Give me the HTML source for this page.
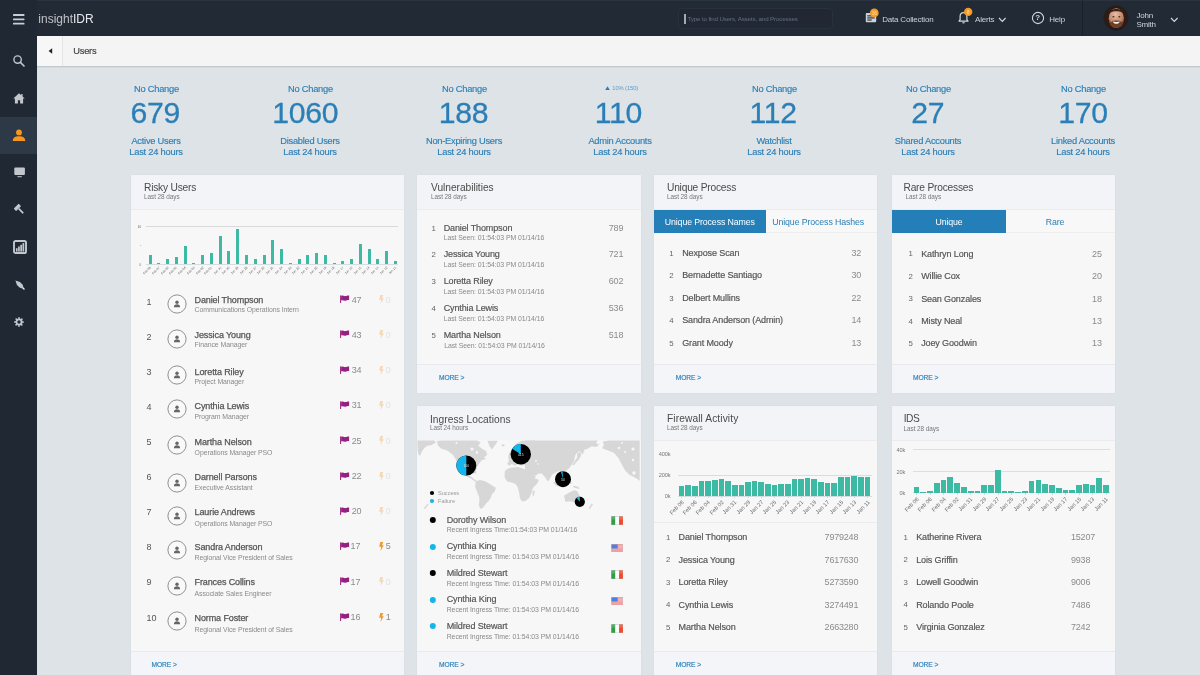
<!DOCTYPE html>
<html><head><meta charset="utf-8"><title>insightIDR - Users</title>
<style>
html,body{margin:0;padding:0;}
body{width:1200px;height:675px;overflow:hidden;background:#dde3e6;font-family:"Liberation Sans",sans-serif;position:relative;}
.t{position:absolute;line-height:1;white-space:nowrap;}
.abs{position:absolute;}
#topbar{position:absolute;left:0;top:0;width:1200px;height:36px;background:#222a36;box-sizing:border-box;border-top:1px solid #2b333f;}
#side{position:absolute;left:0;top:0;width:37px;height:675px;background:#202834;}
#side .act{position:absolute;left:0;top:117px;width:37px;height:37px;background:#2d3946;}
#crumb{position:absolute;left:37px;top:36px;width:1163px;height:30px;background:#f4f4f4;border-bottom:1px solid #c3c8cc;box-shadow:0 1px 0 rgba(0,0,0,0.04);}
#crumb .back{position:absolute;left:0;top:0;width:25px;height:30px;background:#f7f7f7;border-right:1px solid #e6e6e6;}
.panel{position:absolute;background:#f7f7f7;box-shadow:0 0 1px rgba(0,0,0,0.08);}
.panel .hd{position:absolute;left:0;top:0;right:0;height:35px;background:#f3f4f8;border-bottom:1px solid #ececf0;box-sizing:border-box;}
.panel .ft{position:absolute;left:0;right:0;background:#f3f5f9;border-top:1px solid #e9eaee;box-sizing:border-box;}
.bar{position:absolute;background:#3dbaa3;}
.grid{position:absolute;height:1px;background:#dcdcdc;}
.rot{position:absolute;white-space:nowrap;line-height:1;transform-origin:100% 50%;transform:rotate(-45deg);color:#6c6c6c;}
#root{position:absolute;left:0;top:0;width:1200px;height:675px;will-change:transform;}
</style></head><body><div id="root">

<div id="topbar"></div>
<div id="side"><div class="act"></div></div>
<svg class="abs" style="left:13px;top:14px" width="12" height="11" viewBox="0 0 12 11"><g fill="#c9ced4"><rect x="0" y="0.100" width="11.500" height="1.800" rx="0.600"/><rect x="0" y="4.400" width="11.500" height="1.800" rx="0.600"/><rect x="0" y="8.700" width="11.500" height="1.800" rx="0.600"/></g></svg>
<span class="t" style="top:12px;font-size:12px;line-height:14px;color:#e6e9ec;left:38.30px;"><span style="opacity:.78">insight</span><span>IDR</span></span>
<div class="abs" style="left:677.5px;top:8px;width:155px;height:21px;border:1px solid #28323e;border-radius:4px;box-sizing:border-box;background:#212834"></div>
<div class="abs" style="left:684px;top:14px;width:1.500px;height:9.500px;background:#a3a9b1"></div>
<span class="t" style="top:15px;font-size:6.2px;line-height:7px;color:#65707d;letter-spacing:-0.14px;left:687.50px;">Type to find Users, Assets, and Processes</span>
<svg class="abs" style="left:864px;top:7px" width="18" height="18" viewBox="0 0 18 18"><rect x="1.8" y="6" width="10.4" height="9.2" rx="0.9" fill="#cdd2d8"/><rect x="3.300" y="8.300" width="7.400" height="1.100" fill="#222a36"/><rect x="3.300" y="10.400" width="7.400" height="1.100" fill="#222a36"/><rect x="3.300" y="12.500" width="4.400" height="1.100" fill="#222a36"/><circle cx="10.3" cy="5.9" r="4.4" fill="#f39a27"/></svg>
<span class="t" style="top:11px;font-size:4.6px;line-height:5px;color:#fbe3c4;left:724.30px;width:300px;text-align:center;">16</span>
<span class="t" style="top:15px;font-size:8px;line-height:9px;color:#cfd4da;letter-spacing:-0.2px;left:882.20px;">Data Collection</span>
<svg class="abs" style="left:955px;top:7px" width="18" height="20" viewBox="0 0 18 20"><path d="M8.500 5.600c-2.300 0-3.400 1.800-3.400 3.900v3.200l-1.100 1.500h9l-1.100-1.500V9.500c0-2.100-1.100-3.900-3.400-3.900z" fill="none" stroke="#d3d7dc" stroke-width="1.200" stroke-linejoin="round"/><path d="M7.200 15.200a1.300 1.300 0 0 0 2.600 0z" fill="#d3d7dc"/><circle cx="13.2" cy="4.900" r="4.200" fill="#f39a27"/></svg>
<span class="t" style="top:10px;font-size:4.6px;line-height:5px;color:#fbe3c4;left:818.20px;width:300px;text-align:center;">8</span>
<span class="t" style="top:15px;font-size:8px;line-height:9px;color:#cfd4da;letter-spacing:-0.2px;left:975.00px;">Alerts</span>
<svg class="abs" style="left:998px;top:16.700px" width="9" height="6" viewBox="0 0 9 6"><path d="M1 1l3.300 3.300L7.600 1" fill="none" stroke="#d3d7dc" stroke-width="1.200"/></svg>
<svg class="abs" style="left:1030.800px;top:10.500px" width="14" height="14" viewBox="0 0 14 14"><circle cx="7" cy="7" r="5.600" fill="none" stroke="#d3d7dc" stroke-width="1.100"/></svg>
<span class="t" style="top:13px;font-size:8px;line-height:9px;color:#d3d7dc;font-weight:700;left:887.80px;width:300px;text-align:center;">?</span>
<span class="t" style="top:15px;font-size:8px;line-height:9px;color:#cfd4da;letter-spacing:-0.2px;left:1049.30px;">Help</span>
<div class="abs" style="left:1082px;top:0;width:1px;height:36px;background:#1a212b"></div>
<svg class="abs" style="left:1103.200px;top:4.500px" width="26" height="26" viewBox="0 0 26 26"><defs><clipPath id="av"><circle cx="13" cy="13" r="12.400"/></clipPath><radialGradient id="sk" cx="0.450" cy="0.300" r="0.750"><stop offset="0" stop-color="#e9bda6"/><stop offset="0.450" stop-color="#cf9576"/><stop offset="1" stop-color="#9c5f45"/></radialGradient><filter id="bl" x="-20%" y="-20%" width="140%" height="140%"><feGaussianBlur stdDeviation="0.400"/></filter></defs><g clip-path="url(#av)"><rect width="26" height="26" fill="#2b1c16"/><g filter="url(#bl)"><ellipse cx="13.300" cy="13.200" rx="7.600" ry="10" fill="url(#sk)"/><path d="M5.200 11.500C4.300 1.500 22.300 1.500 21.400 11.500C20.600 7.800 18.500 6.200 13.300 6.200S6 7.800 5.200 11.500z" fill="#38201a"/><path d="M5.800 13.500C6 26 20.600 26 20.800 13.500C19.800 17.200 18.300 17.800 16.900 15.900C15.500 15.200 11.100 15.200 9.700 15.900C8.300 17.800 6.800 17.200 5.800 13.500z" fill="#6d3f2c"/><path d="M9.900 16.500C11.500 17.100 15.100 17.100 16.700 16.500C16.200 19.600 10.400 19.600 9.900 16.500z" fill="#f8f2ee"/><ellipse cx="10.400" cy="11.700" rx="1.100" ry="0.800" fill="#4a2f26"/><ellipse cx="16.300" cy="11.700" rx="1.100" ry="0.800" fill="#4a2f26"/><path d="M3 27c0-3.200 4.500-3.800 10.300-3.800s10.300.6 10.300 3.800z" fill="#1c1b20"/></g></g></svg>
<span class="t" style="top:11px;font-size:8px;line-height:9px;color:#cfd4da;letter-spacing:-0.2px;left:1136.40px;">John</span>
<span class="t" style="top:20px;font-size:8px;line-height:9px;color:#cfd4da;letter-spacing:-0.2px;left:1136.40px;">Smith</span>
<svg class="abs" style="left:1170.200px;top:16.700px" width="9" height="6" viewBox="0 0 9 6"><path d="M1 1l3.300 3.300L7.600 1" fill="none" stroke="#d3d7dc" stroke-width="1.200"/></svg>
<svg class="abs" style="left:12px;top:54px" width="14" height="14" viewBox="0 0 14 14"><circle cx="5.6" cy="5.6" r="3.7" fill="none" stroke="#c2c7ce" stroke-width="1.4"/><path d="M8.4 8.4l3.6 3.6" stroke="#c2c7ce" stroke-width="1.7" stroke-linecap="round"/></svg>
<svg class="abs" style="left:13px;top:93px" width="12" height="11" viewBox="0 0 12 11"><path d="M6 0.3L0.3 5.4h1.6v5h3v-3.2h2.2v3.2h3v-5h1.6L9.6 3.5V1h-1.4v1.3z" fill="#c2c7ce"/></svg>
<svg class="abs" style="left:12px;top:129px" width="14" height="13" viewBox="0 0 14 13"><circle cx="7" cy="3.4" r="2.9" fill="#f7981d"/><path d="M0.8 12c0-3.6 2.6-4.8 6.2-4.8s6.2 1.2 6.2 4.8z" fill="#f7981d"/></svg>
<svg class="abs" style="left:13.800px;top:167px" width="12" height="11" viewBox="0 0 12 11"><rect x="0.300" y="0.500" width="10.600" height="7.600" rx="1" fill="#c2c7ce"/><rect x="3.400" y="9.200" width="4.400" height="1" fill="#c2c7ce"/></svg>
<svg class="abs" style="left:14px;top:203.500px" width="12" height="12" viewBox="0 0 12 12"><g transform="rotate(-45 5.5 5.5)"><rect x="2" y="0.800" width="7" height="3.400" rx="0.500" fill="#c2c7ce"/><rect x="4.700" y="4.200" width="1.700" height="6.600" rx="0.500" fill="#c2c7ce"/></g></svg>
<svg class="abs" style="left:12.600px;top:240px" width="14" height="14" viewBox="0 0 14 14"><rect x="1" y="1" width="12" height="12" rx="1.600" fill="none" stroke="#c2c7ce" stroke-width="1.900"/><rect x="2.900" y="8.200" width="1.700" height="3.400" fill="#c2c7ce"/><rect x="5.100" y="6.500" width="1.700" height="5.100" fill="#c2c7ce"/><rect x="7.300" y="4.800" width="1.700" height="6.800" fill="#c2c7ce"/><rect x="9.500" y="3.100" width="1.700" height="8.500" fill="#c2c7ce"/></svg>
<svg class="abs" style="left:14px;top:279px" width="12" height="12" viewBox="0 0 12 12"><g transform="rotate(-45 6 6)"><path d="M6 -0.500l2.100 4.300v3.600L6 12L3.900 7.400v-3.600z" fill="#c2c7ce"/><path d="M6 9.500l0.900 2L6 12.600l-0.900-1.100z" fill="#eef0f2"/></g></svg>
<svg class="abs" style="left:14.400px;top:317px" width="10" height="10" viewBox="0 0 10 10"><rect x="4.300" y="0.200" width="1.500" height="2.200" transform="rotate(0 5 5)" fill="#c2c7ce"/><rect x="4.300" y="0.200" width="1.500" height="2.200" transform="rotate(45 5 5)" fill="#c2c7ce"/><rect x="4.300" y="0.200" width="1.500" height="2.200" transform="rotate(90 5 5)" fill="#c2c7ce"/><rect x="4.300" y="0.200" width="1.500" height="2.200" transform="rotate(135 5 5)" fill="#c2c7ce"/><rect x="4.300" y="0.200" width="1.500" height="2.200" transform="rotate(180 5 5)" fill="#c2c7ce"/><rect x="4.300" y="0.200" width="1.500" height="2.200" transform="rotate(225 5 5)" fill="#c2c7ce"/><rect x="4.300" y="0.200" width="1.500" height="2.200" transform="rotate(270 5 5)" fill="#c2c7ce"/><rect x="4.300" y="0.200" width="1.500" height="2.200" transform="rotate(315 5 5)" fill="#c2c7ce"/><circle cx="5" cy="5" r="2.600" fill="none" stroke="#c2c7ce" stroke-width="1.800"/></svg>
<div id="crumb"><div class="back"></div></div>
<svg class="abs" style="left:48px;top:48px" width="5" height="6" viewBox="0 0 5 6"><path d="M4.2 0.3v5.4L0.6 3z" fill="#222"/></svg>
<span class="t" style="top:46px;font-size:9.3px;line-height:10px;color:#444;letter-spacing:-0.25px;left:73.30px;-webkit-text-stroke:0.2px #444;">Users</span>
<span class="t" style="top:84px;font-size:9.3px;line-height:10px;color:#2b7fb7;letter-spacing:-0.25px;left:6.50px;width:300px;text-align:center;-webkit-text-stroke:0.15px #2b7fb7;">No Change</span>
<span class="t" style="top:96px;font-size:30.2px;line-height:33px;color:#2b7fb7;letter-spacing:-0.3px;left:5.20px;width:300px;text-align:center;-webkit-text-stroke:0.3px #2b7fb7;">679</span>
<span class="t" style="top:136px;font-size:9.3px;line-height:10px;color:#2b7fb7;letter-spacing:-0.25px;left:6.00px;width:300px;text-align:center;-webkit-text-stroke:0.15px #2b7fb7;">Active Users</span>
<span class="t" style="top:147px;font-size:9.3px;line-height:10px;color:#2b7fb7;letter-spacing:-0.22px;left:6.00px;width:300px;text-align:center;-webkit-text-stroke:0.15px #2b7fb7;">Last 24 hours</span>
<span class="t" style="top:84px;font-size:9.3px;line-height:10px;color:#2b7fb7;letter-spacing:-0.25px;left:160.50px;width:300px;text-align:center;-webkit-text-stroke:0.15px #2b7fb7;">No Change</span>
<span class="t" style="top:96px;font-size:30.2px;line-height:33px;color:#2b7fb7;letter-spacing:-0.3px;left:155.30px;width:300px;text-align:center;-webkit-text-stroke:0.3px #2b7fb7;">1060</span>
<span class="t" style="top:136px;font-size:9.3px;line-height:10px;color:#2b7fb7;letter-spacing:-0.25px;left:160.00px;width:300px;text-align:center;-webkit-text-stroke:0.15px #2b7fb7;">Disabled Users</span>
<span class="t" style="top:147px;font-size:9.3px;line-height:10px;color:#2b7fb7;letter-spacing:-0.22px;left:160.00px;width:300px;text-align:center;-webkit-text-stroke:0.15px #2b7fb7;">Last 24 hours</span>
<span class="t" style="top:84px;font-size:9.3px;line-height:10px;color:#2b7fb7;letter-spacing:-0.25px;left:314.50px;width:300px;text-align:center;-webkit-text-stroke:0.15px #2b7fb7;">No Change</span>
<span class="t" style="top:96px;font-size:30.2px;line-height:33px;color:#2b7fb7;letter-spacing:-0.3px;left:313.50px;width:300px;text-align:center;-webkit-text-stroke:0.3px #2b7fb7;">188</span>
<span class="t" style="top:136px;font-size:9.3px;line-height:10px;color:#2b7fb7;letter-spacing:-0.25px;left:314.00px;width:300px;text-align:center;-webkit-text-stroke:0.15px #2b7fb7;">Non-Expiring Users</span>
<span class="t" style="top:147px;font-size:9.3px;line-height:10px;color:#2b7fb7;letter-spacing:-0.22px;left:314.00px;width:300px;text-align:center;-webkit-text-stroke:0.15px #2b7fb7;">Last 24 hours</span>
<svg class="abs" style="left:605px;top:85.700px" width="5" height="4.500" viewBox="0 0 6 5"><path d="M3 0L6 5H0z" fill="#2b7fb7"/></svg>
<span class="t" style="top:85px;font-size:5.8px;line-height:6px;color:#5b9cc9;letter-spacing:-0.1px;left:612.30px;">10% (150)</span>
<span class="t" style="top:96px;font-size:30.2px;line-height:33px;color:#2b7fb7;letter-spacing:-0.3px;left:468.30px;width:300px;text-align:center;-webkit-text-stroke:0.3px #2b7fb7;">110</span>
<span class="t" style="top:136px;font-size:9.3px;line-height:10px;color:#2b7fb7;letter-spacing:-0.25px;left:470.00px;width:300px;text-align:center;-webkit-text-stroke:0.15px #2b7fb7;">Admin Accounts</span>
<span class="t" style="top:147px;font-size:9.3px;line-height:10px;color:#2b7fb7;letter-spacing:-0.22px;left:470.00px;width:300px;text-align:center;-webkit-text-stroke:0.15px #2b7fb7;">Last 24 hours</span>
<span class="t" style="top:84px;font-size:9.3px;line-height:10px;color:#2b7fb7;letter-spacing:-0.25px;left:624.50px;width:300px;text-align:center;-webkit-text-stroke:0.15px #2b7fb7;">No Change</span>
<span class="t" style="top:96px;font-size:30.2px;line-height:33px;color:#2b7fb7;letter-spacing:-0.3px;left:623.20px;width:300px;text-align:center;-webkit-text-stroke:0.3px #2b7fb7;">112</span>
<span class="t" style="top:136px;font-size:9.3px;line-height:10px;color:#2b7fb7;letter-spacing:-0.25px;left:624.00px;width:300px;text-align:center;-webkit-text-stroke:0.15px #2b7fb7;">Watchlist</span>
<span class="t" style="top:147px;font-size:9.3px;line-height:10px;color:#2b7fb7;letter-spacing:-0.22px;left:624.00px;width:300px;text-align:center;-webkit-text-stroke:0.15px #2b7fb7;">Last 24 hours</span>
<span class="t" style="top:84px;font-size:9.3px;line-height:10px;color:#2b7fb7;letter-spacing:-0.25px;left:778.50px;width:300px;text-align:center;-webkit-text-stroke:0.15px #2b7fb7;">No Change</span>
<span class="t" style="top:96px;font-size:30.2px;line-height:33px;color:#2b7fb7;letter-spacing:-0.3px;left:777.70px;width:300px;text-align:center;-webkit-text-stroke:0.3px #2b7fb7;">27</span>
<span class="t" style="top:136px;font-size:9.3px;line-height:10px;color:#2b7fb7;letter-spacing:-0.25px;left:778.00px;width:300px;text-align:center;-webkit-text-stroke:0.15px #2b7fb7;">Shared Accounts</span>
<span class="t" style="top:147px;font-size:9.3px;line-height:10px;color:#2b7fb7;letter-spacing:-0.22px;left:778.00px;width:300px;text-align:center;-webkit-text-stroke:0.15px #2b7fb7;">Last 24 hours</span>
<span class="t" style="top:84px;font-size:9.3px;line-height:10px;color:#2b7fb7;letter-spacing:-0.25px;left:933.50px;width:300px;text-align:center;-webkit-text-stroke:0.15px #2b7fb7;">No Change</span>
<span class="t" style="top:96px;font-size:30.2px;line-height:33px;color:#2b7fb7;letter-spacing:-0.3px;left:933.00px;width:300px;text-align:center;-webkit-text-stroke:0.3px #2b7fb7;">170</span>
<span class="t" style="top:136px;font-size:9.3px;line-height:10px;color:#2b7fb7;letter-spacing:-0.25px;left:933.00px;width:300px;text-align:center;-webkit-text-stroke:0.15px #2b7fb7;">Linked Accounts</span>
<span class="t" style="top:147px;font-size:9.3px;line-height:10px;color:#2b7fb7;letter-spacing:-0.22px;left:933.00px;width:300px;text-align:center;-webkit-text-stroke:0.15px #2b7fb7;">Last 24 hours</span>
<div class="panel" style="left:131px;top:175px;width:273px;height:520px"><div class="hd"></div><div class="ft" style="top:476px;height:44px"></div></div>
<span class="t" style="top:182px;font-size:10.2px;line-height:11px;color:#4a4a4a;letter-spacing:-0.2px;left:144.00px;">Risky Users</span>
<span class="t" style="top:193px;font-size:6.4px;line-height:7px;color:#777;letter-spacing:-0.05px;left:144.00px;">Last 28 days</span>
<div class="grid" style="left:146px;top:226px;width:252px;background:#d9d9d9"></div>
<div class="grid" style="left:146px;top:264px;width:252px;background:#d4dde0"></div>
<span class="t" style="top:225px;font-size:3px;line-height:4px;color:#666;right:1058.80px;">40</span>
<span class="t" style="top:243px;font-size:3px;line-height:4px;color:#666;right:1058.80px;">-</span>
<span class="t" style="top:263px;font-size:3px;line-height:4px;color:#666;right:1058.80px;">0</span>
<div class="bar" style="left:148.70px;top:255.20px;width:3px;height:8.80px"></div>
<span class="rot" style="font-size:3.1px;right:1049.20px;top:266.20px;color:#666">Feb 08</span>
<div class="bar" style="left:157.45px;top:262.50px;width:3px;height:1.50px"></div>
<span class="rot" style="font-size:3.1px;right:1040.45px;top:266.20px;color:#666">Feb 07</span>
<div class="bar" style="left:166.21px;top:259.00px;width:3px;height:5.00px"></div>
<span class="rot" style="font-size:3.1px;right:1031.69px;top:266.20px;color:#666">Feb 06</span>
<div class="bar" style="left:174.96px;top:257.00px;width:3px;height:7.00px"></div>
<span class="rot" style="font-size:3.1px;right:1022.94px;top:266.20px;color:#666">Feb 05</span>
<div class="bar" style="left:183.72px;top:245.60px;width:3px;height:18.40px"></div>
<span class="rot" style="font-size:3.1px;right:1014.18px;top:266.20px;color:#666">Feb 04</span>
<div class="bar" style="left:192.47px;top:262.50px;width:3px;height:1.50px"></div>
<span class="rot" style="font-size:3.1px;right:1005.43px;top:266.20px;color:#666">Feb 03</span>
<div class="bar" style="left:201.22px;top:255.20px;width:3px;height:8.80px"></div>
<span class="rot" style="font-size:3.1px;right:996.68px;top:266.20px;color:#666">Feb 02</span>
<div class="bar" style="left:209.98px;top:253.20px;width:3px;height:10.80px"></div>
<span class="rot" style="font-size:3.1px;right:987.92px;top:266.20px;color:#666">Feb 01</span>
<div class="bar" style="left:218.73px;top:236.00px;width:3px;height:28.00px"></div>
<span class="rot" style="font-size:3.1px;right:979.17px;top:266.20px;color:#666">Jan 31</span>
<div class="bar" style="left:227.49px;top:251.20px;width:3px;height:12.80px"></div>
<span class="rot" style="font-size:3.1px;right:970.41px;top:266.20px;color:#666">Jan 30</span>
<div class="bar" style="left:236.24px;top:228.70px;width:3px;height:35.30px"></div>
<span class="rot" style="font-size:3.1px;right:961.66px;top:266.20px;color:#666">Jan 29</span>
<div class="bar" style="left:244.99px;top:255.20px;width:3px;height:8.80px"></div>
<span class="rot" style="font-size:3.1px;right:952.91px;top:266.20px;color:#666">Jan 28</span>
<div class="bar" style="left:253.75px;top:259.00px;width:3px;height:5.00px"></div>
<span class="rot" style="font-size:3.1px;right:944.15px;top:266.20px;color:#666">Jan 27</span>
<div class="bar" style="left:262.50px;top:255.20px;width:3px;height:8.80px"></div>
<span class="rot" style="font-size:3.1px;right:935.40px;top:266.20px;color:#666">Jan 26</span>
<div class="bar" style="left:271.26px;top:240.00px;width:3px;height:24.00px"></div>
<span class="rot" style="font-size:3.1px;right:926.64px;top:266.20px;color:#666">Jan 25</span>
<div class="bar" style="left:280.01px;top:249.40px;width:3px;height:14.60px"></div>
<span class="rot" style="font-size:3.1px;right:917.89px;top:266.20px;color:#666">Jan 24</span>
<div class="bar" style="left:288.76px;top:262.50px;width:3px;height:1.50px"></div>
<span class="rot" style="font-size:3.1px;right:909.14px;top:266.20px;color:#666">Jan 23</span>
<div class="bar" style="left:297.52px;top:259.00px;width:3px;height:5.00px"></div>
<span class="rot" style="font-size:3.1px;right:900.38px;top:266.20px;color:#666">Jan 22</span>
<div class="bar" style="left:306.27px;top:255.20px;width:3px;height:8.80px"></div>
<span class="rot" style="font-size:3.1px;right:891.63px;top:266.20px;color:#666">Jan 21</span>
<div class="bar" style="left:315.03px;top:253.20px;width:3px;height:10.80px"></div>
<span class="rot" style="font-size:3.1px;right:882.87px;top:266.20px;color:#666">Jan 20</span>
<div class="bar" style="left:323.78px;top:255.20px;width:3px;height:8.80px"></div>
<span class="rot" style="font-size:3.1px;right:874.12px;top:266.20px;color:#666">Jan 19</span>
<div class="bar" style="left:332.53px;top:262.50px;width:3px;height:1.50px"></div>
<span class="rot" style="font-size:3.1px;right:865.37px;top:266.20px;color:#666">Jan 18</span>
<div class="bar" style="left:341.29px;top:260.70px;width:3px;height:3.30px"></div>
<span class="rot" style="font-size:3.1px;right:856.61px;top:266.20px;color:#666">Jan 17</span>
<div class="bar" style="left:350.04px;top:259.00px;width:3px;height:5.00px"></div>
<span class="rot" style="font-size:3.1px;right:847.86px;top:266.20px;color:#666">Jan 16</span>
<div class="bar" style="left:358.80px;top:243.80px;width:3px;height:20.20px"></div>
<span class="rot" style="font-size:3.1px;right:839.10px;top:266.20px;color:#666">Jan 15</span>
<div class="bar" style="left:367.55px;top:249.40px;width:3px;height:14.60px"></div>
<span class="rot" style="font-size:3.1px;right:830.35px;top:266.20px;color:#666">Jan 14</span>
<div class="bar" style="left:376.30px;top:259.00px;width:3px;height:5.00px"></div>
<span class="rot" style="font-size:3.1px;right:821.60px;top:266.20px;color:#666">Jan 13</span>
<div class="bar" style="left:385.06px;top:251.20px;width:3px;height:12.80px"></div>
<span class="rot" style="font-size:3.1px;right:812.84px;top:266.20px;color:#666">Jan 12</span>
<div class="bar" style="left:393.81px;top:260.70px;width:3px;height:3.30px"></div>
<span class="rot" style="font-size:3.1px;right:804.09px;top:266.20px;color:#666">Jan 11</span>
<span class="t" style="top:297px;font-size:9px;line-height:10px;color:#555;letter-spacing:-0.2px;left:146.60px;">1</span>
<svg class="abs" style="left:166.6px;top:293.70px" width="20" height="20" viewBox="0 0 20 20"><circle cx="10" cy="10" r="9.100" fill="#f9f9f9" stroke="#858585" stroke-width="0.900"/><circle cx="10" cy="8.3" r="1.7" fill="#666"/><path d="M6.9 13.2c0-2.2 1.3-3 3.1-3s3.1.8 3.1 3z" fill="#666"/></svg>
<span class="t" style="top:295px;font-size:9px;line-height:10px;color:#555;letter-spacing:-0.12px;left:194.60px;-webkit-text-stroke:0.25px #555;">Daniel Thompson</span>
<span class="t" style="top:306px;font-size:6.9px;line-height:7px;color:#8a8a8a;letter-spacing:-0.07px;left:194.60px;">Communications Operations Intern</span>
<svg class="abs" style="left:340px;top:295.20px" width="10" height="9" viewBox="0 0 10 9"><path d="M0.600 0.400v7.600" stroke="#96207e" stroke-width="1"/><path d="M1.1 0.9c1.6-.9 2.8.5 4.4.2s2.2-.9 3.600-.5v4.600c-1.400-.4-2 .2-3.600.5s-2.800-1.100-4.400-.2z" fill="#96207e"/></svg>
<span class="t" style="top:295px;font-size:9px;line-height:10px;color:#8b8b8b;letter-spacing:-0.2px;left:351.80px;">47</span>
<svg class="abs" style="left:378.900px;top:295.20px" width="5" height="9" viewBox="0 0 5 9"><path d="M1.300 0h2.900L3 3.300h1.800L1.500 9l.7-4.300H0.200z" fill="#f6d6b4"/></svg>
<span class="t" style="top:295px;font-size:9px;line-height:10px;color:#e2e2e2;letter-spacing:-0.2px;left:385.80px;">0</span>
<span class="t" style="top:332px;font-size:9px;line-height:10px;color:#555;letter-spacing:-0.2px;left:146.60px;">2</span>
<svg class="abs" style="left:166.6px;top:328.70px" width="20" height="20" viewBox="0 0 20 20"><circle cx="10" cy="10" r="9.100" fill="#f9f9f9" stroke="#858585" stroke-width="0.900"/><circle cx="10" cy="8.3" r="1.7" fill="#666"/><path d="M6.9 13.2c0-2.2 1.3-3 3.1-3s3.1.8 3.1 3z" fill="#666"/></svg>
<span class="t" style="top:330px;font-size:9px;line-height:10px;color:#555;letter-spacing:-0.12px;left:194.60px;-webkit-text-stroke:0.25px #555;">Jessica Young</span>
<span class="t" style="top:341px;font-size:6.9px;line-height:7px;color:#8a8a8a;letter-spacing:-0.07px;left:194.60px;">Finance Manager</span>
<svg class="abs" style="left:340px;top:330.47px" width="10" height="9" viewBox="0 0 10 9"><path d="M0.600 0.400v7.600" stroke="#96207e" stroke-width="1"/><path d="M1.1 0.9c1.6-.9 2.8.5 4.4.2s2.2-.9 3.600-.5v4.600c-1.400-.4-2 .2-3.600.5s-2.800-1.100-4.400-.2z" fill="#96207e"/></svg>
<span class="t" style="top:330px;font-size:9px;line-height:10px;color:#8b8b8b;letter-spacing:-0.2px;left:351.80px;">43</span>
<svg class="abs" style="left:378.900px;top:330.47px" width="5" height="9" viewBox="0 0 5 9"><path d="M1.300 0h2.900L3 3.300h1.800L1.500 9l.7-4.300H0.200z" fill="#f6d6b4"/></svg>
<span class="t" style="top:330px;font-size:9px;line-height:10px;color:#e2e2e2;letter-spacing:-0.2px;left:385.80px;">0</span>
<span class="t" style="top:367px;font-size:9px;line-height:10px;color:#555;letter-spacing:-0.2px;left:146.60px;">3</span>
<svg class="abs" style="left:166.6px;top:365.20px" width="20" height="20" viewBox="0 0 20 20"><circle cx="10" cy="10" r="9.100" fill="#f9f9f9" stroke="#858585" stroke-width="0.900"/><circle cx="10" cy="8.3" r="1.7" fill="#666"/><path d="M6.9 13.2c0-2.2 1.3-3 3.1-3s3.1.8 3.1 3z" fill="#666"/></svg>
<span class="t" style="top:367px;font-size:9px;line-height:10px;color:#555;letter-spacing:-0.12px;left:194.60px;-webkit-text-stroke:0.25px #555;">Loretta Riley</span>
<span class="t" style="top:378px;font-size:6.9px;line-height:7px;color:#8a8a8a;letter-spacing:-0.07px;left:194.60px;">Project Manager</span>
<svg class="abs" style="left:340px;top:365.74px" width="10" height="9" viewBox="0 0 10 9"><path d="M0.600 0.400v7.600" stroke="#96207e" stroke-width="1"/><path d="M1.1 0.9c1.6-.9 2.8.5 4.4.2s2.2-.9 3.600-.5v4.600c-1.400-.4-2 .2-3.600.5s-2.800-1.100-4.400-.2z" fill="#96207e"/></svg>
<span class="t" style="top:365px;font-size:9px;line-height:10px;color:#8b8b8b;letter-spacing:-0.2px;left:351.80px;">34</span>
<svg class="abs" style="left:378.900px;top:365.74px" width="5" height="9" viewBox="0 0 5 9"><path d="M1.300 0h2.900L3 3.300h1.800L1.500 9l.7-4.300H0.200z" fill="#f6d6b4"/></svg>
<span class="t" style="top:365px;font-size:9px;line-height:10px;color:#e2e2e2;letter-spacing:-0.2px;left:385.80px;">0</span>
<span class="t" style="top:402px;font-size:9px;line-height:10px;color:#555;letter-spacing:-0.2px;left:146.60px;">4</span>
<svg class="abs" style="left:166.6px;top:399.30px" width="20" height="20" viewBox="0 0 20 20"><circle cx="10" cy="10" r="9.100" fill="#f9f9f9" stroke="#858585" stroke-width="0.900"/><circle cx="10" cy="8.3" r="1.7" fill="#666"/><path d="M6.9 13.2c0-2.2 1.3-3 3.1-3s3.1.8 3.1 3z" fill="#666"/></svg>
<span class="t" style="top:401px;font-size:9px;line-height:10px;color:#555;letter-spacing:-0.12px;left:194.60px;-webkit-text-stroke:0.25px #555;">Cynthia Lewis</span>
<span class="t" style="top:413px;font-size:6.9px;line-height:7px;color:#8a8a8a;letter-spacing:-0.07px;left:194.60px;">Program Manager</span>
<svg class="abs" style="left:340px;top:401.01px" width="10" height="9" viewBox="0 0 10 9"><path d="M0.600 0.400v7.600" stroke="#96207e" stroke-width="1"/><path d="M1.1 0.9c1.6-.9 2.8.5 4.4.2s2.2-.9 3.600-.5v4.600c-1.400-.4-2 .2-3.600.5s-2.800-1.100-4.400-.2z" fill="#96207e"/></svg>
<span class="t" style="top:400px;font-size:9px;line-height:10px;color:#8b8b8b;letter-spacing:-0.2px;left:351.80px;">31</span>
<svg class="abs" style="left:378.900px;top:401.01px" width="5" height="9" viewBox="0 0 5 9"><path d="M1.300 0h2.900L3 3.300h1.800L1.500 9l.7-4.300H0.200z" fill="#f6d6b4"/></svg>
<span class="t" style="top:400px;font-size:9px;line-height:10px;color:#e2e2e2;letter-spacing:-0.2px;left:385.80px;">0</span>
<span class="t" style="top:437px;font-size:9px;line-height:10px;color:#555;letter-spacing:-0.2px;left:146.60px;">5</span>
<svg class="abs" style="left:166.6px;top:435.10px" width="20" height="20" viewBox="0 0 20 20"><circle cx="10" cy="10" r="9.100" fill="#f9f9f9" stroke="#858585" stroke-width="0.900"/><circle cx="10" cy="8.3" r="1.7" fill="#666"/><path d="M6.9 13.2c0-2.2 1.3-3 3.1-3s3.1.8 3.1 3z" fill="#666"/></svg>
<span class="t" style="top:437px;font-size:9px;line-height:10px;color:#555;letter-spacing:-0.12px;left:194.60px;-webkit-text-stroke:0.25px #555;">Martha Nelson</span>
<span class="t" style="top:449px;font-size:6.9px;line-height:7px;color:#8a8a8a;letter-spacing:-0.07px;left:194.60px;">Operations Manager PSO</span>
<svg class="abs" style="left:340px;top:436.28px" width="10" height="9" viewBox="0 0 10 9"><path d="M0.600 0.400v7.600" stroke="#96207e" stroke-width="1"/><path d="M1.1 0.9c1.6-.9 2.8.5 4.4.2s2.2-.9 3.600-.5v4.600c-1.400-.4-2 .2-3.600.5s-2.800-1.100-4.400-.2z" fill="#96207e"/></svg>
<span class="t" style="top:436px;font-size:9px;line-height:10px;color:#8b8b8b;letter-spacing:-0.2px;left:351.80px;">25</span>
<svg class="abs" style="left:378.900px;top:436.28px" width="5" height="9" viewBox="0 0 5 9"><path d="M1.300 0h2.900L3 3.300h1.800L1.500 9l.7-4.300H0.200z" fill="#f6d6b4"/></svg>
<span class="t" style="top:436px;font-size:9px;line-height:10px;color:#e2e2e2;letter-spacing:-0.2px;left:385.80px;">0</span>
<span class="t" style="top:472px;font-size:9px;line-height:10px;color:#555;letter-spacing:-0.2px;left:146.60px;">6</span>
<svg class="abs" style="left:166.6px;top:472.50px" width="20" height="20" viewBox="0 0 20 20"><circle cx="10" cy="10" r="9.100" fill="#f9f9f9" stroke="#858585" stroke-width="0.900"/><circle cx="10" cy="8.3" r="1.7" fill="#666"/><path d="M6.9 13.2c0-2.2 1.3-3 3.1-3s3.1.8 3.1 3z" fill="#666"/></svg>
<span class="t" style="top:472px;font-size:9px;line-height:10px;color:#555;letter-spacing:-0.12px;left:194.60px;-webkit-text-stroke:0.25px #555;">Darnell Parsons</span>
<span class="t" style="top:484px;font-size:6.9px;line-height:7px;color:#8a8a8a;letter-spacing:-0.07px;left:194.60px;">Executive Assistant</span>
<svg class="abs" style="left:340px;top:471.55px" width="10" height="9" viewBox="0 0 10 9"><path d="M0.600 0.400v7.600" stroke="#96207e" stroke-width="1"/><path d="M1.1 0.9c1.6-.9 2.8.5 4.4.2s2.2-.9 3.600-.5v4.600c-1.400-.4-2 .2-3.600.5s-2.800-1.100-4.400-.2z" fill="#96207e"/></svg>
<span class="t" style="top:471px;font-size:9px;line-height:10px;color:#8b8b8b;letter-spacing:-0.2px;left:351.80px;">22</span>
<svg class="abs" style="left:378.900px;top:471.55px" width="5" height="9" viewBox="0 0 5 9"><path d="M1.300 0h2.900L3 3.300h1.800L1.500 9l.7-4.300H0.200z" fill="#f6d6b4"/></svg>
<span class="t" style="top:471px;font-size:9px;line-height:10px;color:#e2e2e2;letter-spacing:-0.2px;left:385.80px;">0</span>
<span class="t" style="top:507px;font-size:9px;line-height:10px;color:#555;letter-spacing:-0.2px;left:146.60px;">7</span>
<svg class="abs" style="left:166.6px;top:506.10px" width="20" height="20" viewBox="0 0 20 20"><circle cx="10" cy="10" r="9.100" fill="#f9f9f9" stroke="#858585" stroke-width="0.900"/><circle cx="10" cy="8.3" r="1.7" fill="#666"/><path d="M6.9 13.2c0-2.2 1.3-3 3.1-3s3.1.8 3.1 3z" fill="#666"/></svg>
<span class="t" style="top:507px;font-size:9px;line-height:10px;color:#555;letter-spacing:-0.12px;left:194.60px;-webkit-text-stroke:0.25px #555;">Laurie Andrews</span>
<span class="t" style="top:520px;font-size:6.9px;line-height:7px;color:#8a8a8a;letter-spacing:-0.07px;left:194.60px;">Operations Manager PSO</span>
<svg class="abs" style="left:340px;top:506.82px" width="10" height="9" viewBox="0 0 10 9"><path d="M0.600 0.400v7.600" stroke="#96207e" stroke-width="1"/><path d="M1.1 0.9c1.6-.9 2.8.5 4.4.2s2.2-.9 3.600-.5v4.600c-1.400-.4-2 .2-3.600.5s-2.800-1.100-4.400-.2z" fill="#96207e"/></svg>
<span class="t" style="top:506px;font-size:9px;line-height:10px;color:#8b8b8b;letter-spacing:-0.2px;left:351.80px;">20</span>
<svg class="abs" style="left:378.900px;top:506.82px" width="5" height="9" viewBox="0 0 5 9"><path d="M1.300 0h2.900L3 3.300h1.800L1.500 9l.7-4.300H0.200z" fill="#f6d6b4"/></svg>
<span class="t" style="top:506px;font-size:9px;line-height:10px;color:#e2e2e2;letter-spacing:-0.2px;left:385.80px;">0</span>
<span class="t" style="top:542px;font-size:9px;line-height:10px;color:#555;letter-spacing:-0.2px;left:146.60px;">8</span>
<svg class="abs" style="left:166.6px;top:539.90px" width="20" height="20" viewBox="0 0 20 20"><circle cx="10" cy="10" r="9.100" fill="#f9f9f9" stroke="#858585" stroke-width="0.900"/><circle cx="10" cy="8.3" r="1.7" fill="#666"/><path d="M6.9 13.2c0-2.2 1.3-3 3.1-3s3.1.8 3.1 3z" fill="#666"/></svg>
<span class="t" style="top:542px;font-size:9px;line-height:10px;color:#555;letter-spacing:-0.12px;left:194.60px;-webkit-text-stroke:0.25px #555;">Sandra Anderson</span>
<span class="t" style="top:554px;font-size:6.9px;line-height:7px;color:#8a8a8a;letter-spacing:-0.07px;left:194.60px;">Regional Vice President of Sales</span>
<svg class="abs" style="left:340px;top:542.09px" width="10" height="9" viewBox="0 0 10 9"><path d="M0.600 0.400v7.600" stroke="#96207e" stroke-width="1"/><path d="M1.1 0.9c1.6-.9 2.8.5 4.4.2s2.2-.9 3.600-.5v4.600c-1.400-.4-2 .2-3.600.5s-2.800-1.100-4.400-.2z" fill="#96207e"/></svg>
<span class="t" style="top:541px;font-size:9px;line-height:10px;color:#8b8b8b;letter-spacing:-0.2px;left:350.60px;">17</span>
<svg class="abs" style="left:378.900px;top:542.09px" width="5" height="9" viewBox="0 0 5 9"><path d="M1.300 0h2.900L3 3.300h1.800L1.500 9l.7-4.300H0.200z" fill="#f0992f"/></svg>
<span class="t" style="top:541px;font-size:9px;line-height:10px;color:#8b8b8b;letter-spacing:-0.2px;left:385.80px;">5</span>
<span class="t" style="top:577px;font-size:9px;line-height:10px;color:#555;letter-spacing:-0.2px;left:146.60px;">9</span>
<svg class="abs" style="left:166.6px;top:575.90px" width="20" height="20" viewBox="0 0 20 20"><circle cx="10" cy="10" r="9.100" fill="#f9f9f9" stroke="#858585" stroke-width="0.900"/><circle cx="10" cy="8.3" r="1.7" fill="#666"/><path d="M6.9 13.2c0-2.2 1.3-3 3.1-3s3.1.8 3.1 3z" fill="#666"/></svg>
<span class="t" style="top:577px;font-size:9px;line-height:10px;color:#555;letter-spacing:-0.12px;left:194.60px;-webkit-text-stroke:0.25px #555;">Frances Collins</span>
<span class="t" style="top:590px;font-size:6.9px;line-height:7px;color:#8a8a8a;letter-spacing:-0.07px;left:194.60px;">Associate Sales Engineer</span>
<svg class="abs" style="left:340px;top:577.36px" width="10" height="9" viewBox="0 0 10 9"><path d="M0.600 0.400v7.600" stroke="#96207e" stroke-width="1"/><path d="M1.1 0.9c1.6-.9 2.8.5 4.4.2s2.2-.9 3.600-.5v4.600c-1.400-.4-2 .2-3.600.5s-2.800-1.100-4.400-.2z" fill="#96207e"/></svg>
<span class="t" style="top:577px;font-size:9px;line-height:10px;color:#8b8b8b;letter-spacing:-0.2px;left:350.60px;">17</span>
<svg class="abs" style="left:378.900px;top:577.36px" width="5" height="9" viewBox="0 0 5 9"><path d="M1.300 0h2.900L3 3.300h1.800L1.500 9l.7-4.300H0.200z" fill="#f6d6b4"/></svg>
<span class="t" style="top:577px;font-size:9px;line-height:10px;color:#e2e2e2;letter-spacing:-0.2px;left:385.80px;">0</span>
<span class="t" style="top:613px;font-size:9px;line-height:10px;color:#555;letter-spacing:-0.2px;left:146.60px;">10</span>
<svg class="abs" style="left:166.6px;top:610.90px" width="20" height="20" viewBox="0 0 20 20"><circle cx="10" cy="10" r="9.100" fill="#f9f9f9" stroke="#858585" stroke-width="0.900"/><circle cx="10" cy="8.3" r="1.7" fill="#666"/><path d="M6.9 13.2c0-2.2 1.3-3 3.1-3s3.1.8 3.1 3z" fill="#666"/></svg>
<span class="t" style="top:613px;font-size:9px;line-height:10px;color:#555;letter-spacing:-0.12px;left:194.60px;-webkit-text-stroke:0.25px #555;">Norma Foster</span>
<span class="t" style="top:626px;font-size:6.9px;line-height:7px;color:#8a8a8a;letter-spacing:-0.07px;left:194.60px;">Regional Vice President of Sales</span>
<svg class="abs" style="left:340px;top:612.63px" width="10" height="9" viewBox="0 0 10 9"><path d="M0.600 0.400v7.600" stroke="#96207e" stroke-width="1"/><path d="M1.1 0.9c1.6-.9 2.8.5 4.4.2s2.2-.9 3.600-.5v4.600c-1.400-.4-2 .2-3.600.5s-2.800-1.100-4.400-.2z" fill="#96207e"/></svg>
<span class="t" style="top:612px;font-size:9px;line-height:10px;color:#8b8b8b;letter-spacing:-0.2px;left:350.60px;">16</span>
<svg class="abs" style="left:378.900px;top:612.63px" width="5" height="9" viewBox="0 0 5 9"><path d="M1.300 0h2.900L3 3.300h1.800L1.500 9l.7-4.300H0.200z" fill="#f0992f"/></svg>
<span class="t" style="top:612px;font-size:9px;line-height:10px;color:#8b8b8b;letter-spacing:-0.2px;left:385.80px;">1</span>
<span class="t" style="top:661px;font-size:6.7px;line-height:7px;color:#2b7fb7;letter-spacing:-0.1px;left:151.50px;-webkit-text-stroke:0.15px #2b7fb7;">MORE &gt;</span>
<div class="panel" style="left:417px;top:175px;width:223.5px;height:217.5px"><div class="hd"></div><div class="ft" style="top:189px;height:28.5px"></div></div>
<span class="t" style="top:182px;font-size:10.2px;line-height:11px;color:#4a4a4a;letter-spacing:-0.03px;left:431.00px;">Vulnerabilities</span>
<span class="t" style="top:193px;font-size:6.4px;line-height:7px;color:#777;letter-spacing:-0.05px;left:431.00px;">Last 28 days</span>
<span class="t" style="top:224px;font-size:7.8px;line-height:9px;color:#666;left:431.40px;">1</span>
<span class="t" style="top:223px;font-size:9px;line-height:10px;color:#555;letter-spacing:-0.12px;left:443.70px;-webkit-text-stroke:0.18px #555;">Daniel Thompson</span>
<span class="t" style="top:234px;font-size:6.9px;line-height:7px;color:#8a8a8a;letter-spacing:-0.07px;left:443.70px;">Last Seen: 01:54:03 PM 01/14/16</span>
<span class="t" style="top:223px;font-size:9px;line-height:10px;color:#8b8b8b;letter-spacing:-0.2px;right:576.80px;">789</span>
<span class="t" style="top:250px;font-size:7.8px;line-height:9px;color:#666;left:431.40px;">2</span>
<span class="t" style="top:249px;font-size:9px;line-height:10px;color:#555;letter-spacing:-0.12px;left:443.70px;-webkit-text-stroke:0.18px #555;">Jessica Young</span>
<span class="t" style="top:261px;font-size:6.9px;line-height:7px;color:#8a8a8a;letter-spacing:-0.07px;left:443.70px;">Last Seen: 01:54:03 PM 01/14/16</span>
<span class="t" style="top:249px;font-size:9px;line-height:10px;color:#8b8b8b;letter-spacing:-0.2px;right:576.80px;">721</span>
<span class="t" style="top:277px;font-size:7.8px;line-height:9px;color:#666;left:431.40px;">3</span>
<span class="t" style="top:276px;font-size:9px;line-height:10px;color:#555;letter-spacing:-0.12px;left:443.70px;-webkit-text-stroke:0.18px #555;">Loretta Riley</span>
<span class="t" style="top:288px;font-size:6.9px;line-height:7px;color:#8a8a8a;letter-spacing:-0.07px;left:443.70px;">Last Seen: 01:54:03 PM 01/14/16</span>
<span class="t" style="top:276px;font-size:9px;line-height:10px;color:#8b8b8b;letter-spacing:-0.2px;right:576.80px;">602</span>
<span class="t" style="top:304px;font-size:7.8px;line-height:9px;color:#666;left:431.40px;">4</span>
<span class="t" style="top:303px;font-size:9px;line-height:10px;color:#555;letter-spacing:-0.12px;left:443.70px;-webkit-text-stroke:0.18px #555;">Cynthia Lewis</span>
<span class="t" style="top:315px;font-size:6.9px;line-height:7px;color:#8a8a8a;letter-spacing:-0.07px;left:443.70px;">Last Seen: 01:54:03 PM 01/14/16</span>
<span class="t" style="top:303px;font-size:9px;line-height:10px;color:#8b8b8b;letter-spacing:-0.2px;right:576.80px;">536</span>
<span class="t" style="top:331px;font-size:7.8px;line-height:9px;color:#666;left:431.40px;">5</span>
<span class="t" style="top:330px;font-size:9px;line-height:10px;color:#555;letter-spacing:-0.12px;left:443.70px;-webkit-text-stroke:0.18px #555;">Martha Nelson</span>
<span class="t" style="top:342px;font-size:6.9px;line-height:7px;color:#8a8a8a;letter-spacing:-0.07px;left:444.20px;">Last Seen: 01:54:03 PM 01/14/16</span>
<span class="t" style="top:330px;font-size:9px;line-height:10px;color:#8b8b8b;letter-spacing:-0.2px;right:576.80px;">518</span>
<span class="t" style="top:374px;font-size:6.7px;line-height:7px;color:#2b7fb7;letter-spacing:-0.1px;left:439.00px;-webkit-text-stroke:0.15px #2b7fb7;">MORE &gt;</span>
<div class="panel" style="left:654px;top:175px;width:222.5px;height:217.5px"><div class="hd"></div><div class="ft" style="top:189px;height:28.5px"></div></div>
<span class="t" style="top:182px;font-size:10.2px;line-height:11px;color:#4a4a4a;letter-spacing:-0.2px;left:667.00px;">Unique Process</span>
<span class="t" style="top:193px;font-size:6.4px;line-height:7px;color:#777;letter-spacing:-0.05px;left:667.00px;">Last 28 days</span>
<div class="abs" style="left:654px;top:210px;width:222.5px;height:23px;background:#f8f8f8;border-bottom:1px solid #eeeeee;box-sizing:border-box"></div>
<div class="abs" style="left:654px;top:210px;width:111.500px;height:23px;background:#247fb8"></div>
<span class="t" style="top:217px;font-size:8.8px;line-height:10px;color:#fff;letter-spacing:-0.12px;left:559.80px;width:300px;text-align:center;">Unique Process Names</span>
<span class="t" style="top:217px;font-size:8.8px;line-height:10px;color:#2b7fb7;letter-spacing:-0.12px;left:668.20px;width:300px;text-align:center;">Unique Process Hashes</span>
<span class="t" style="top:249px;font-size:7.8px;line-height:9px;color:#666;letter-spacing:-0.2px;left:669.30px;">1</span>
<span class="t" style="top:248px;font-size:9px;line-height:10px;color:#555;letter-spacing:-0.12px;left:682.20px;-webkit-text-stroke:0.18px #555;">Nexpose Scan</span>
<span class="t" style="top:248px;font-size:9px;line-height:10px;color:#8b8b8b;letter-spacing:-0.2px;right:339.00px;">32</span>
<span class="t" style="top:271px;font-size:7.8px;line-height:9px;color:#666;letter-spacing:-0.2px;left:669.30px;">2</span>
<span class="t" style="top:270px;font-size:9px;line-height:10px;color:#555;letter-spacing:-0.12px;left:682.20px;-webkit-text-stroke:0.18px #555;">Bernadette Santiago</span>
<span class="t" style="top:270px;font-size:9px;line-height:10px;color:#8b8b8b;letter-spacing:-0.2px;right:339.00px;">30</span>
<span class="t" style="top:294px;font-size:7.8px;line-height:9px;color:#666;letter-spacing:-0.2px;left:669.30px;">3</span>
<span class="t" style="top:293px;font-size:9px;line-height:10px;color:#555;letter-spacing:-0.12px;left:682.20px;-webkit-text-stroke:0.18px #555;">Delbert Mullins</span>
<span class="t" style="top:293px;font-size:9px;line-height:10px;color:#8b8b8b;letter-spacing:-0.2px;right:339.00px;">22</span>
<span class="t" style="top:316px;font-size:7.8px;line-height:9px;color:#666;letter-spacing:-0.2px;left:669.30px;">4</span>
<span class="t" style="top:315px;font-size:9px;line-height:10px;color:#555;letter-spacing:-0.12px;left:682.20px;-webkit-text-stroke:0.18px #555;">Sandra Anderson (Admin)</span>
<span class="t" style="top:315px;font-size:9px;line-height:10px;color:#8b8b8b;letter-spacing:-0.2px;right:339.00px;">14</span>
<span class="t" style="top:339px;font-size:7.8px;line-height:9px;color:#666;letter-spacing:-0.2px;left:669.30px;">5</span>
<span class="t" style="top:338px;font-size:9px;line-height:10px;color:#555;letter-spacing:-0.12px;left:682.20px;-webkit-text-stroke:0.18px #555;">Grant Moody</span>
<span class="t" style="top:338px;font-size:9px;line-height:10px;color:#8b8b8b;letter-spacing:-0.2px;right:339.00px;">13</span>
<span class="t" style="top:374px;font-size:6.7px;line-height:7px;color:#2b7fb7;letter-spacing:-0.1px;left:675.80px;-webkit-text-stroke:0.15px #2b7fb7;">MORE &gt;</span>
<div class="panel" style="left:891.5px;top:175px;width:223px;height:217.5px"><div class="hd"></div><div class="ft" style="top:189px;height:28.5px"></div></div>
<span class="t" style="top:182px;font-size:10.2px;line-height:11px;color:#4a4a4a;letter-spacing:-0.2px;left:903.50px;">Rare Processes</span>
<span class="t" style="top:193px;font-size:6.4px;line-height:7px;color:#777;letter-spacing:-0.05px;left:905.50px;">Last 28 days</span>
<div class="abs" style="left:891.5px;top:210px;width:223px;height:23px;background:#f8f8f8;border-bottom:1px solid #eeeeee;box-sizing:border-box"></div>
<div class="abs" style="left:891.5px;top:210px;width:114.5px;height:23px;background:#247fb8"></div>
<span class="t" style="top:217px;font-size:8.8px;line-height:10px;color:#fff;letter-spacing:-0.12px;left:799.00px;width:300px;text-align:center;">Unique</span>
<span class="t" style="top:217px;font-size:8.8px;line-height:10px;color:#2b7fb7;letter-spacing:-0.12px;left:905.00px;width:300px;text-align:center;">Rare</span>
<span class="t" style="top:249px;font-size:7.8px;line-height:9px;color:#666;letter-spacing:-0.2px;left:908.60px;">1</span>
<span class="t" style="top:249px;font-size:9px;line-height:10px;color:#555;letter-spacing:-0.12px;left:921.20px;-webkit-text-stroke:0.18px #555;">Kathryn Long</span>
<span class="t" style="top:249px;font-size:9px;line-height:10px;color:#8b8b8b;letter-spacing:-0.2px;right:98.30px;">25</span>
<span class="t" style="top:272px;font-size:7.8px;line-height:9px;color:#666;letter-spacing:-0.2px;left:908.60px;">2</span>
<span class="t" style="top:271px;font-size:9px;line-height:10px;color:#555;letter-spacing:-0.12px;left:921.20px;-webkit-text-stroke:0.18px #555;">Willie Cox</span>
<span class="t" style="top:271px;font-size:9px;line-height:10px;color:#8b8b8b;letter-spacing:-0.2px;right:98.30px;">20</span>
<span class="t" style="top:294px;font-size:7.8px;line-height:9px;color:#666;letter-spacing:-0.2px;left:908.60px;">3</span>
<span class="t" style="top:294px;font-size:9px;line-height:10px;color:#555;letter-spacing:-0.12px;left:921.20px;-webkit-text-stroke:0.18px #555;">Sean Gonzales</span>
<span class="t" style="top:294px;font-size:9px;line-height:10px;color:#8b8b8b;letter-spacing:-0.2px;right:98.30px;">18</span>
<span class="t" style="top:317px;font-size:7.8px;line-height:9px;color:#666;letter-spacing:-0.2px;left:908.60px;">4</span>
<span class="t" style="top:316px;font-size:9px;line-height:10px;color:#555;letter-spacing:-0.12px;left:921.20px;-webkit-text-stroke:0.18px #555;">Misty Neal</span>
<span class="t" style="top:316px;font-size:9px;line-height:10px;color:#8b8b8b;letter-spacing:-0.2px;right:98.30px;">13</span>
<span class="t" style="top:339px;font-size:7.8px;line-height:9px;color:#666;letter-spacing:-0.2px;left:908.60px;">5</span>
<span class="t" style="top:338px;font-size:9px;line-height:10px;color:#555;letter-spacing:-0.12px;left:921.20px;-webkit-text-stroke:0.18px #555;">Joey Goodwin</span>
<span class="t" style="top:338px;font-size:9px;line-height:10px;color:#8b8b8b;letter-spacing:-0.2px;right:98.30px;">13</span>
<span class="t" style="top:374px;font-size:6.7px;line-height:7px;color:#2b7fb7;letter-spacing:-0.1px;left:913.00px;-webkit-text-stroke:0.15px #2b7fb7;">MORE &gt;</span>
<div class="panel" style="left:417px;top:405.5px;width:223.5px;height:290px"><div class="hd"></div><div class="ft" style="top:245.5px;height:44.5px"></div></div>
<span class="t" style="top:414px;font-size:10.2px;line-height:11px;color:#4a4a4a;letter-spacing:0.04px;left:430.00px;">Ingress Locations</span>
<span class="t" style="top:424px;font-size:6.4px;line-height:7px;color:#777;letter-spacing:-0.05px;left:430.00px;">Last 24 hours</span>
<svg class="abs" style="left:417px;top:440px" width="223.5" height="71" viewBox="417 440 223.5 71"><rect x="417" y="440" width="224" height="71" fill="#f7f7f7"/><polygon points="417.4,440.4 434.4,440.4 435.9,442.4 431.7,444.9 427.2,445.8 424.1,448.2 421.9,451.6 420.0,455.8 418.6,454.7 417.7,450.2" fill="#d7d7d7"/><polygon points="423.7,508.2 427.4,503.8 428.6,504.4 425.0,508.9" fill="#d7d7d7"/><polygon points="437.0,440.9 441.7,440.4 477.2,440.4 480.6,442.4 478.3,445.8 481.7,448.6 486.1,451.3 487.2,454.7 483.9,457.4 486.1,459.1 481.7,460.2 478.9,464.1 477.2,466.3 475.9,470.2 476.3,473.3 474.4,473.8 472.8,471.3 468.3,471.3 467.2,474.7 470.6,476.3 475.0,479.7 477.2,481.6 475.9,482.2 471.1,478.6 467.2,476.9 462.8,472.4 459.4,468.0 457.8,464.1 456.3,460.2 453.3,455.2 447.8,450.8 441.1,448.6 437.8,445.2" fill="#d7d7d7"/><polygon points="487.4,440.7 497.8,440.7 495.9,444.1 493.3,447.4 491.7,449.4 489.7,446.3 488.3,443.0" fill="#d7d7d7"/><polygon points="501.4,444.4 504.1,444.2 504.6,445.8 502.3,446.4" fill="#d7d7d7"/><polygon points="475.6,482.7 477.2,480.8 480.0,480.0 484.4,480.9 488.3,483.0 491.7,485.2 495.8,487.8 494.8,491.3 492.2,494.1 490.6,498.0 488.9,500.8 486.1,503.6 483.3,507.4 480.6,508.9 478.8,505.8 479.4,500.2 479.2,496.9 477.2,491.9 475.2,486.9" fill="#d7d7d7"/><polygon points="508.3,456.3 509.4,452.4 512.2,449.1 515.0,444.7 518.3,442.4 521.7,440.7 535.0,440.4 535.0,465.8 531.7,464.7 528.3,465.8 525.0,464.7 521.7,465.8 518.3,464.1 515.0,465.8 511.7,464.1 509.4,465.8 507.2,464.1 508.9,460.8" fill="#d7d7d7"/><polygon points="504.8,471.3 507.2,469.1 510.6,467.8 518.3,467.1 524.4,469.1 529.4,470.0 531.7,473.6 534.4,478.6 538.9,479.7 537.2,483.6 532.8,488.0 531.7,492.4 529.4,497.4 526.1,500.8 522.2,501.6 520.0,498.6 519.2,493.0 517.8,487.4 515.6,484.1 511.7,482.4 507.2,481.6 504.6,477.4" fill="#d7d7d7"/><polygon points="525.0,440.4 597.8,440.4 596.1,443.0 598.9,444.7 601.7,443.0 596.1,446.9 591.7,446.3 587.2,449.1 584.4,449.7 582.8,454.7 580.0,451.3 577.2,452.4 575.0,455.8 574.4,460.2 571.7,464.7 569.4,468.0 566.7,470.2 563.9,471.3 558.3,471.3 553.9,473.6 551.7,475.2 548.9,480.8 547.2,480.8 544.4,476.3 541.7,473.6 538.3,473.6 535.6,475.8 531.7,474.7 530.0,471.3 527.2,470.2 525.0,471.3" fill="#d7d7d7"/><polygon points="525.0,471.3 529.4,472.4 535.6,476.3 533.9,481.3 531.7,483.6 528.9,484.7 526.1,480.2 525.0,479.1" fill="#d7d7d7"/><polygon points="577.2,453.0 580.6,451.9 581.1,455.8 578.3,460.2 575.6,463.0 573.9,465.2 572.2,464.7 575.0,460.8 577.2,457.4" fill="#d7d7d7"/><polygon points="532.6,491.3 534.8,490.2 534.3,494.7 532.8,496.9" fill="#d7d7d7"/><polygon points="552.8,482.4 555.0,481.9 558.3,485.8 556.7,486.3" fill="#d7d7d7"/><polygon points="572.8,485.6 578.3,486.7 579.7,489.1 577.2,488.6 573.9,487.4" fill="#d7d7d7"/><polygon points="568.9,481.9 571.1,480.8 571.7,483.6 569.4,484.1" fill="#d7d7d7"/><polygon points="563.9,495.8 568.9,492.7 573.9,490.2 577.2,491.1 579.4,495.2 582.8,500.2 580.6,504.7 573.9,501.9 569.4,501.3 565.6,501.9" fill="#d7d7d7"/><polygon points="588.6,508.2 591.7,503.6 593.0,504.2 589.9,508.9" fill="#d7d7d7"/><polygon points="602.8,441.6 609.4,440.4 639.7,440.4 639.7,480.8 636.1,478.2 629.4,474.7 625.0,470.2 621.9,464.7 618.6,458.2 613.9,452.7 607.2,450.2 602.2,448.2 603.9,444.7" fill="#d7d7d7"/><circle cx="472" cy="449" r="1.6" fill="#f7f7f7"/><circle cx="477" cy="452.5" r="1.2" fill="#f7f7f7"/><circle cx="456.5" cy="443" r="1" fill="#f7f7f7"/><circle cx="619" cy="448" r="1.2" fill="#f7f7f7"/><circle cx="625" cy="452" r="1" fill="#f7f7f7"/><circle cx="633" cy="449" r="1.6" fill="#f7f7f7"/><circle cx="633" cy="460" r="1.2" fill="#f7f7f7"/><circle cx="634" cy="473" r="1.7" fill="#f7f7f7"/><circle cx="622" cy="443" r="0.9" fill="#f7f7f7"/><circle cx="536" cy="461" r="0.9" fill="#f7f7f7"/><circle cx="538" cy="464" r="0.8" fill="#f7f7f7"/><circle cx="466.3" cy="465.6" r="10" fill="#000"/><path d="M466.3 465.6L466.30 475.60A10 10 0 0 1 466.30 455.60Z" fill="#13b5ea"/><circle cx="520.8" cy="454.2" r="10.2" fill="#000"/><path d="M520.8 454.2L512.15 448.79A10.2 10.2 0 0 1 520.80 444.00Z" fill="#13b5ea"/><circle cx="563" cy="479.2" r="8" fill="#000"/><path d="M563 479.2L560.93 471.47A8 8 0 0 1 562.58 471.21Z" fill="#13b5ea"/><circle cx="579.8" cy="501.8" r="5.1" fill="#000"/><path d="M579.8 501.8L576.52 497.89A5.1 5.1 0 0 1 579.80 496.70Z" fill="#13b5ea"/><circle cx="432" cy="493" r="2.1" fill="#000"/><circle cx="432" cy="501" r="2.1" fill="#13b5ea"/></svg>
<span class="t" style="top:464px;font-size:3.5px;line-height:4px;color:#ddd;left:316.30px;width:300px;text-align:center;">100</span>
<span class="t" style="top:453px;font-size:3.5px;line-height:4px;color:#ddd;left:370.80px;width:300px;text-align:center;">415</span>
<span class="t" style="top:478px;font-size:3.5px;line-height:4px;color:#ddd;left:413.00px;width:300px;text-align:center;">50</span>
<span class="t" style="top:490px;font-size:5.6px;line-height:6px;color:#9a9a9a;left:438.00px;">Success</span>
<span class="t" style="top:498px;font-size:5.6px;line-height:6px;color:#9a9a9a;left:438.00px;">Failure</span>
<svg class="abs" style="left:428px;top:514.9px" width="10" height="10"><circle cx="4.800" cy="5" r="3" fill="#000"/></svg>
<span class="t" style="top:515px;font-size:9px;line-height:10px;color:#555;letter-spacing:-0.12px;left:446.70px;-webkit-text-stroke:0.18px #555;">Dorothy Wilson</span>
<span class="t" style="top:526px;font-size:6.9px;line-height:7px;color:#8a8a8a;letter-spacing:-0.06px;left:446.70px;">Recent Ingress Time:01:54:03 PM 01/14/16</span>
<svg class="abs" style="left:611px;top:516.2px" width="12.4" height="9.2" viewBox="0 0 12.4 9.2"><rect width="12.4" height="9.2" rx="0.800" fill="#b9b9b9"/><rect x="0.500" y="0.500" width="3.800" height="8.200" fill="#2e9e47"/><rect x="4.300" y="0.500" width="3.800" height="8.200" fill="#fbfbfb"/><rect x="8.100" y="0.500" width="3.800" height="8.200" fill="#ef4a2c"/><rect x="0.500" y="0.500" width="11.400" height="3" fill="#fff" opacity="0.180"/></svg>
<svg class="abs" style="left:428px;top:541.5px" width="10" height="10"><circle cx="4.800" cy="5" r="3" fill="#13b5ea"/></svg>
<span class="t" style="top:541px;font-size:9px;line-height:10px;color:#555;letter-spacing:-0.12px;left:446.70px;-webkit-text-stroke:0.18px #555;">Cynthia King</span>
<span class="t" style="top:553px;font-size:6.9px;line-height:7px;color:#8a8a8a;letter-spacing:-0.06px;left:446.70px;">Recent Ingress Time: 01:54:03 PM 01/14/16</span>
<svg class="abs" style="left:611px;top:543.8px" width="12.4" height="8.4" viewBox="0 0 12.4 8.4"><rect width="12.4" height="8.4" rx="0.800" fill="#c4c4c4"/><rect x="0.500" y="0.500" width="11.400" height="7.400" fill="#f3d3d3"/><rect x="0.500" y="0.50" width="11.400" height="0.570" fill="#e57f7f"/><rect x="0.500" y="1.64" width="11.400" height="0.570" fill="#e57f7f"/><rect x="0.500" y="2.78" width="11.400" height="0.570" fill="#e57f7f"/><rect x="0.500" y="3.92" width="11.400" height="0.570" fill="#e57f7f"/><rect x="0.500" y="5.06" width="11.400" height="0.570" fill="#e57f7f"/><rect x="0.500" y="6.20" width="11.400" height="0.570" fill="#e57f7f"/><rect x="0.500" y="7.34" width="11.400" height="0.570" fill="#e57f7f"/><rect x="0.500" y="0.500" width="6.200" height="4" fill="#4f7fe0"/></svg>
<svg class="abs" style="left:428px;top:568.3px" width="10" height="10"><circle cx="4.800" cy="5" r="3" fill="#000"/></svg>
<span class="t" style="top:568px;font-size:9px;line-height:10px;color:#555;letter-spacing:-0.12px;left:446.70px;-webkit-text-stroke:0.18px #555;">Mildred Stewart</span>
<span class="t" style="top:580px;font-size:6.9px;line-height:7px;color:#8a8a8a;letter-spacing:-0.06px;left:446.70px;">Recent Ingress Time: 01:54:03 PM 01/14/16</span>
<svg class="abs" style="left:611px;top:570.3px" width="12.4" height="9.2" viewBox="0 0 12.4 9.2"><rect width="12.4" height="9.2" rx="0.800" fill="#b9b9b9"/><rect x="0.500" y="0.500" width="3.800" height="8.200" fill="#2e9e47"/><rect x="4.300" y="0.500" width="3.800" height="8.200" fill="#fbfbfb"/><rect x="8.100" y="0.500" width="3.800" height="8.200" fill="#ef4a2c"/><rect x="0.500" y="0.500" width="11.400" height="3" fill="#fff" opacity="0.180"/></svg>
<svg class="abs" style="left:428px;top:595.2px" width="10" height="10"><circle cx="4.800" cy="5" r="3" fill="#13b5ea"/></svg>
<span class="t" style="top:594px;font-size:9px;line-height:10px;color:#555;letter-spacing:-0.12px;left:446.70px;-webkit-text-stroke:0.18px #555;">Cynthia King</span>
<span class="t" style="top:606px;font-size:6.9px;line-height:7px;color:#8a8a8a;letter-spacing:-0.06px;left:446.70px;">Recent Ingress Time: 01:54:03 PM 01/14/16</span>
<svg class="abs" style="left:611px;top:596.8px" width="12.4" height="8.4" viewBox="0 0 12.4 8.4"><rect width="12.4" height="8.4" rx="0.800" fill="#c4c4c4"/><rect x="0.500" y="0.500" width="11.400" height="7.400" fill="#f3d3d3"/><rect x="0.500" y="0.50" width="11.400" height="0.570" fill="#e57f7f"/><rect x="0.500" y="1.64" width="11.400" height="0.570" fill="#e57f7f"/><rect x="0.500" y="2.78" width="11.400" height="0.570" fill="#e57f7f"/><rect x="0.500" y="3.92" width="11.400" height="0.570" fill="#e57f7f"/><rect x="0.500" y="5.06" width="11.400" height="0.570" fill="#e57f7f"/><rect x="0.500" y="6.20" width="11.400" height="0.570" fill="#e57f7f"/><rect x="0.500" y="7.34" width="11.400" height="0.570" fill="#e57f7f"/><rect x="0.500" y="0.500" width="6.200" height="4" fill="#4f7fe0"/></svg>
<svg class="abs" style="left:428px;top:621.2px" width="10" height="10"><circle cx="4.800" cy="5" r="3" fill="#13b5ea"/></svg>
<span class="t" style="top:621px;font-size:9px;line-height:10px;color:#555;letter-spacing:-0.12px;left:446.70px;-webkit-text-stroke:0.18px #555;">Mildred Stewart</span>
<span class="t" style="top:633px;font-size:6.9px;line-height:7px;color:#8a8a8a;letter-spacing:-0.06px;left:446.70px;">Recent Ingress Time: 01:54:03 PM 01/14/16</span>
<svg class="abs" style="left:611px;top:623.5px" width="12.4" height="9.2" viewBox="0 0 12.4 9.2"><rect width="12.4" height="9.2" rx="0.800" fill="#b9b9b9"/><rect x="0.500" y="0.500" width="3.800" height="8.200" fill="#2e9e47"/><rect x="4.300" y="0.500" width="3.800" height="8.200" fill="#fbfbfb"/><rect x="8.100" y="0.500" width="3.800" height="8.200" fill="#ef4a2c"/><rect x="0.500" y="0.500" width="11.400" height="3" fill="#fff" opacity="0.180"/></svg>
<span class="t" style="top:661px;font-size:6.7px;line-height:7px;color:#2b7fb7;letter-spacing:-0.1px;left:439.00px;-webkit-text-stroke:0.15px #2b7fb7;">MORE &gt;</span>
<div class="panel" style="left:654px;top:405.5px;width:222.5px;height:290px"><div class="hd"></div><div class="ft" style="top:245.5px;height:44.5px"></div></div>
<span class="t" style="top:413px;font-size:10.2px;line-height:11px;color:#4a4a4a;letter-spacing:0.1px;left:667.00px;">Firewall Activity</span>
<span class="t" style="top:424px;font-size:6.4px;line-height:7px;color:#777;letter-spacing:-0.05px;left:667.00px;">Last 28 days</span>
<div class="abs" style="left:654px;top:522px;width:222.5px;height:1px;background:#ebebee"></div>
<span class="t" style="top:451px;font-size:5.6px;line-height:6px;color:#777;letter-spacing:-0.1px;right:529.50px;">400k</span>
<div class="grid" style="left:678.3px;top:474.7px;width:193.4px;background:#dcdcdc"></div>
<span class="t" style="top:472px;font-size:5.6px;line-height:6px;color:#777;letter-spacing:-0.1px;right:529.50px;">200k</span>
<div class="grid" style="left:678.3px;top:495.5px;width:193.4px;background:#d4dde0"></div>
<span class="t" style="top:493px;font-size:5.6px;line-height:6px;color:#777;letter-spacing:-0.1px;right:529.50px;">0k</span>
<div class="bar" style="left:678.80px;top:486.20px;width:5.63px;height:9.80px"></div>
<div class="abs" style="left:681.37px;top:496px;width:0.6px;height:2px;background:#cfd8dc"></div>
<span class="rot" style="font-size:5.6px;right:516.88px;top:499.20px">Feb 08</span>
<div class="bar" style="left:685.43px;top:484.60px;width:5.63px;height:11.40px"></div>
<div class="bar" style="left:692.07px;top:485.80px;width:5.63px;height:10.20px"></div>
<div class="abs" style="left:694.64px;top:496px;width:0.6px;height:2px;background:#cfd8dc"></div>
<span class="rot" style="font-size:5.6px;right:503.61px;top:499.20px">Feb 06</span>
<div class="bar" style="left:698.70px;top:481.20px;width:5.63px;height:14.80px"></div>
<div class="bar" style="left:705.34px;top:481.20px;width:5.63px;height:14.80px"></div>
<div class="abs" style="left:707.91px;top:496px;width:0.6px;height:2px;background:#cfd8dc"></div>
<span class="rot" style="font-size:5.6px;right:490.34px;top:499.20px">Feb 04</span>
<div class="bar" style="left:711.97px;top:480.20px;width:5.63px;height:15.80px"></div>
<div class="bar" style="left:718.61px;top:479.00px;width:5.63px;height:17.00px"></div>
<div class="abs" style="left:721.17px;top:496px;width:0.6px;height:2px;background:#cfd8dc"></div>
<span class="rot" style="font-size:5.6px;right:477.08px;top:499.20px">Feb 02</span>
<div class="bar" style="left:725.24px;top:481.20px;width:5.63px;height:14.80px"></div>
<div class="bar" style="left:731.88px;top:484.60px;width:5.63px;height:11.40px"></div>
<div class="abs" style="left:734.44px;top:496px;width:0.6px;height:2px;background:#cfd8dc"></div>
<span class="rot" style="font-size:5.6px;right:463.81px;top:499.20px">Jan 31</span>
<div class="bar" style="left:738.51px;top:484.60px;width:5.63px;height:11.40px"></div>
<div class="bar" style="left:745.14px;top:481.50px;width:5.63px;height:14.50px"></div>
<div class="abs" style="left:747.71px;top:496px;width:0.6px;height:2px;background:#cfd8dc"></div>
<span class="rot" style="font-size:5.6px;right:450.54px;top:499.20px">Jan 29</span>
<div class="bar" style="left:751.78px;top:481.20px;width:5.63px;height:14.80px"></div>
<div class="bar" style="left:758.41px;top:481.50px;width:5.63px;height:14.50px"></div>
<div class="abs" style="left:760.98px;top:496px;width:0.6px;height:2px;background:#cfd8dc"></div>
<span class="rot" style="font-size:5.6px;right:437.27px;top:499.20px">Jan 27</span>
<div class="bar" style="left:765.05px;top:484.20px;width:5.63px;height:11.80px"></div>
<div class="bar" style="left:771.68px;top:484.60px;width:5.63px;height:11.40px"></div>
<div class="abs" style="left:774.25px;top:496px;width:0.6px;height:2px;background:#cfd8dc"></div>
<span class="rot" style="font-size:5.6px;right:424.00px;top:499.20px">Jan 25</span>
<div class="bar" style="left:778.32px;top:484.20px;width:5.63px;height:11.80px"></div>
<div class="bar" style="left:784.95px;top:484.20px;width:5.63px;height:11.80px"></div>
<div class="abs" style="left:787.52px;top:496px;width:0.6px;height:2px;background:#cfd8dc"></div>
<span class="rot" style="font-size:5.6px;right:410.73px;top:499.20px">Jan 23</span>
<div class="bar" style="left:791.59px;top:479.20px;width:5.63px;height:16.80px"></div>
<div class="bar" style="left:798.22px;top:479.00px;width:5.63px;height:17.00px"></div>
<div class="abs" style="left:800.79px;top:496px;width:0.6px;height:2px;background:#cfd8dc"></div>
<span class="rot" style="font-size:5.6px;right:397.46px;top:499.20px">Jan 21</span>
<div class="bar" style="left:804.86px;top:477.70px;width:5.63px;height:18.30px"></div>
<div class="bar" style="left:811.49px;top:478.80px;width:5.63px;height:17.20px"></div>
<div class="abs" style="left:814.06px;top:496px;width:0.6px;height:2px;background:#cfd8dc"></div>
<span class="rot" style="font-size:5.6px;right:384.19px;top:499.20px">Jan 19</span>
<div class="bar" style="left:818.12px;top:482.10px;width:5.63px;height:13.90px"></div>
<div class="bar" style="left:824.76px;top:483.30px;width:5.63px;height:12.70px"></div>
<div class="abs" style="left:827.33px;top:496px;width:0.6px;height:2px;background:#cfd8dc"></div>
<span class="rot" style="font-size:5.6px;right:370.92px;top:499.20px">Jan 17</span>
<div class="bar" style="left:831.39px;top:483.30px;width:5.63px;height:12.70px"></div>
<div class="bar" style="left:838.03px;top:476.80px;width:5.63px;height:19.20px"></div>
<div class="abs" style="left:840.59px;top:496px;width:0.6px;height:2px;background:#cfd8dc"></div>
<span class="rot" style="font-size:5.6px;right:357.66px;top:499.20px">Jan 15</span>
<div class="bar" style="left:844.66px;top:476.80px;width:5.63px;height:19.20px"></div>
<div class="bar" style="left:851.30px;top:476.20px;width:5.63px;height:19.80px"></div>
<div class="abs" style="left:853.86px;top:496px;width:0.6px;height:2px;background:#cfd8dc"></div>
<span class="rot" style="font-size:5.6px;right:344.39px;top:499.20px">Jan 13</span>
<div class="bar" style="left:857.93px;top:476.50px;width:5.63px;height:19.50px"></div>
<div class="bar" style="left:864.57px;top:476.70px;width:5.63px;height:19.30px"></div>
<div class="abs" style="left:867.13px;top:496px;width:0.6px;height:2px;background:#cfd8dc"></div>
<span class="rot" style="font-size:5.6px;right:331.12px;top:499.20px">Jan 11</span>
<span class="t" style="top:533px;font-size:7.8px;line-height:9px;color:#666;letter-spacing:-0.2px;left:666.00px;">1</span>
<span class="t" style="top:532px;font-size:9px;line-height:10px;color:#555;letter-spacing:-0.12px;left:678.60px;-webkit-text-stroke:0.18px #555;">Daniel Thompson</span>
<span class="t" style="top:532px;font-size:9px;line-height:10px;color:#8b8b8b;letter-spacing:-0.2px;left:824.60px;">7979248</span>
<span class="t" style="top:555px;font-size:7.8px;line-height:9px;color:#666;letter-spacing:-0.2px;left:666.00px;">2</span>
<span class="t" style="top:555px;font-size:9px;line-height:10px;color:#555;letter-spacing:-0.12px;left:678.60px;-webkit-text-stroke:0.18px #555;">Jessica Young</span>
<span class="t" style="top:555px;font-size:9px;line-height:10px;color:#8b8b8b;letter-spacing:-0.2px;left:824.60px;">7617630</span>
<span class="t" style="top:578px;font-size:7.8px;line-height:9px;color:#666;letter-spacing:-0.2px;left:666.00px;">3</span>
<span class="t" style="top:577px;font-size:9px;line-height:10px;color:#555;letter-spacing:-0.12px;left:678.60px;-webkit-text-stroke:0.18px #555;">Loretta Riley</span>
<span class="t" style="top:577px;font-size:9px;line-height:10px;color:#8b8b8b;letter-spacing:-0.2px;left:824.60px;">5273590</span>
<span class="t" style="top:600px;font-size:7.8px;line-height:9px;color:#666;letter-spacing:-0.2px;left:666.00px;">4</span>
<span class="t" style="top:600px;font-size:9px;line-height:10px;color:#555;letter-spacing:-0.12px;left:678.60px;-webkit-text-stroke:0.18px #555;">Cynthia Lewis</span>
<span class="t" style="top:600px;font-size:9px;line-height:10px;color:#8b8b8b;letter-spacing:-0.2px;left:824.60px;">3274491</span>
<span class="t" style="top:623px;font-size:7.8px;line-height:9px;color:#666;letter-spacing:-0.2px;left:666.00px;">5</span>
<span class="t" style="top:622px;font-size:9px;line-height:10px;color:#555;letter-spacing:-0.12px;left:678.60px;-webkit-text-stroke:0.18px #555;">Martha Nelson</span>
<span class="t" style="top:622px;font-size:9px;line-height:10px;color:#8b8b8b;letter-spacing:-0.2px;left:824.60px;">2663280</span>
<span class="t" style="top:661px;font-size:6.7px;line-height:7px;color:#2b7fb7;letter-spacing:-0.1px;left:675.80px;-webkit-text-stroke:0.15px #2b7fb7;">MORE &gt;</span>
<div class="panel" style="left:891.5px;top:405.5px;width:223px;height:290px"><div class="hd"></div><div class="ft" style="top:245.5px;height:44.5px"></div></div>
<span class="t" style="top:413px;font-size:10.2px;line-height:11px;color:#4a4a4a;letter-spacing:-0.5px;left:903.70px;">IDS</span>
<span class="t" style="top:425px;font-size:6.4px;line-height:7px;color:#777;letter-spacing:-0.05px;left:903.50px;">Last 28 days</span>
<div class="grid" style="left:913.1px;top:449.2px;width:197.4px;background:#dedede"></div>
<span class="t" style="top:447px;font-size:5.6px;line-height:6px;color:#777;letter-spacing:-0.1px;right:294.70px;">40k</span>
<div class="grid" style="left:913.1px;top:470.9px;width:197.4px;background:#dedede"></div>
<span class="t" style="top:469px;font-size:5.6px;line-height:6px;color:#777;letter-spacing:-0.1px;right:294.70px;">20k</span>
<div class="grid" style="left:913.1px;top:492.2px;width:197.4px;background:#d4dde0"></div>
<span class="t" style="top:490px;font-size:5.6px;line-height:6px;color:#777;letter-spacing:-0.1px;right:294.70px;">0k</span>
<div class="bar" style="left:913.60px;top:486.70px;width:5.77px;height:6.00px"></div>
<div class="abs" style="left:916.24px;top:492.7px;width:0.6px;height:2px;background:#cfd8dc"></div>
<span class="rot" style="font-size:5.6px;right:282.01px;top:495.90px">Feb 08</span>
<div class="bar" style="left:920.37px;top:491.70px;width:5.77px;height:1.00px"></div>
<div class="bar" style="left:927.14px;top:491.20px;width:5.77px;height:1.50px"></div>
<div class="abs" style="left:929.78px;top:492.7px;width:0.6px;height:2px;background:#cfd8dc"></div>
<span class="rot" style="font-size:5.6px;right:268.47px;top:495.90px">Feb 06</span>
<div class="bar" style="left:933.92px;top:483.20px;width:5.77px;height:9.50px"></div>
<div class="bar" style="left:940.69px;top:480.30px;width:5.77px;height:12.40px"></div>
<div class="abs" style="left:943.33px;top:492.7px;width:0.6px;height:2px;background:#cfd8dc"></div>
<span class="rot" style="font-size:5.6px;right:254.92px;top:495.90px">Feb 04</span>
<div class="bar" style="left:947.46px;top:477.30px;width:5.77px;height:15.40px"></div>
<div class="bar" style="left:954.23px;top:482.50px;width:5.77px;height:10.20px"></div>
<div class="abs" style="left:956.87px;top:492.7px;width:0.6px;height:2px;background:#cfd8dc"></div>
<span class="rot" style="font-size:5.6px;right:241.38px;top:495.90px">Feb 02</span>
<div class="bar" style="left:961.01px;top:486.70px;width:5.77px;height:6.00px"></div>
<div class="bar" style="left:967.78px;top:491.20px;width:5.77px;height:1.50px"></div>
<div class="abs" style="left:970.42px;top:492.7px;width:0.6px;height:2px;background:#cfd8dc"></div>
<span class="rot" style="font-size:5.6px;right:227.83px;top:495.90px">Jan 31</span>
<div class="bar" style="left:974.55px;top:491.20px;width:5.77px;height:1.50px"></div>
<div class="bar" style="left:981.32px;top:484.80px;width:5.77px;height:7.90px"></div>
<div class="abs" style="left:983.96px;top:492.7px;width:0.6px;height:2px;background:#cfd8dc"></div>
<span class="rot" style="font-size:5.6px;right:214.29px;top:495.90px">Jan 29</span>
<div class="bar" style="left:988.10px;top:484.80px;width:5.77px;height:7.90px"></div>
<div class="bar" style="left:994.87px;top:469.90px;width:5.77px;height:22.80px"></div>
<div class="abs" style="left:997.51px;top:492.7px;width:0.6px;height:2px;background:#cfd8dc"></div>
<span class="rot" style="font-size:5.6px;right:200.74px;top:495.90px">Jan 27</span>
<div class="bar" style="left:1001.64px;top:491.20px;width:5.77px;height:1.50px"></div>
<div class="bar" style="left:1008.41px;top:491.20px;width:5.77px;height:1.50px"></div>
<div class="abs" style="left:1011.05px;top:492.7px;width:0.6px;height:2px;background:#cfd8dc"></div>
<span class="rot" style="font-size:5.6px;right:187.20px;top:495.90px">Jan 25</span>
<div class="bar" style="left:1015.19px;top:491.70px;width:5.77px;height:1.00px"></div>
<div class="bar" style="left:1021.96px;top:490.70px;width:5.77px;height:2.00px"></div>
<div class="abs" style="left:1024.59px;top:492.7px;width:0.6px;height:2px;background:#cfd8dc"></div>
<span class="rot" style="font-size:5.6px;right:173.66px;top:495.90px">Jan 23</span>
<div class="bar" style="left:1028.73px;top:480.70px;width:5.77px;height:12.00px"></div>
<div class="bar" style="left:1035.50px;top:479.80px;width:5.77px;height:12.90px"></div>
<div class="abs" style="left:1038.14px;top:492.7px;width:0.6px;height:2px;background:#cfd8dc"></div>
<span class="rot" style="font-size:5.6px;right:160.11px;top:495.90px">Jan 21</span>
<div class="bar" style="left:1042.28px;top:484.40px;width:5.77px;height:8.30px"></div>
<div class="bar" style="left:1049.05px;top:485.40px;width:5.77px;height:7.30px"></div>
<div class="abs" style="left:1051.68px;top:492.7px;width:0.6px;height:2px;background:#cfd8dc"></div>
<span class="rot" style="font-size:5.6px;right:146.57px;top:495.90px">Jan 19</span>
<div class="bar" style="left:1055.82px;top:487.70px;width:5.77px;height:5.00px"></div>
<div class="bar" style="left:1062.59px;top:490.40px;width:5.77px;height:2.30px"></div>
<div class="abs" style="left:1065.23px;top:492.7px;width:0.6px;height:2px;background:#cfd8dc"></div>
<span class="rot" style="font-size:5.6px;right:133.02px;top:495.90px">Jan 17</span>
<div class="bar" style="left:1069.37px;top:490.00px;width:5.77px;height:2.70px"></div>
<div class="bar" style="left:1076.14px;top:484.80px;width:5.77px;height:7.90px"></div>
<div class="abs" style="left:1078.77px;top:492.7px;width:0.6px;height:2px;background:#cfd8dc"></div>
<span class="rot" style="font-size:5.6px;right:119.48px;top:495.90px">Jan 15</span>
<div class="bar" style="left:1082.91px;top:483.60px;width:5.77px;height:9.10px"></div>
<div class="bar" style="left:1089.68px;top:485.40px;width:5.77px;height:7.30px"></div>
<div class="abs" style="left:1092.32px;top:492.7px;width:0.6px;height:2px;background:#cfd8dc"></div>
<span class="rot" style="font-size:5.6px;right:105.93px;top:495.90px">Jan 13</span>
<div class="bar" style="left:1096.46px;top:477.80px;width:5.77px;height:14.90px"></div>
<div class="bar" style="left:1103.23px;top:484.80px;width:5.77px;height:7.90px"></div>
<div class="abs" style="left:1105.86px;top:492.7px;width:0.6px;height:2px;background:#cfd8dc"></div>
<span class="rot" style="font-size:5.6px;right:92.39px;top:495.90px">Jan 11</span>
<span class="t" style="top:533px;font-size:7.8px;line-height:9px;color:#666;letter-spacing:-0.2px;left:903.60px;">1</span>
<span class="t" style="top:532px;font-size:9px;line-height:10px;color:#555;letter-spacing:-0.12px;left:916.20px;-webkit-text-stroke:0.18px #555;">Katherine Rivera</span>
<span class="t" style="top:532px;font-size:9px;line-height:10px;color:#8b8b8b;letter-spacing:-0.2px;left:1071.00px;">15207</span>
<span class="t" style="top:555px;font-size:7.8px;line-height:9px;color:#666;letter-spacing:-0.2px;left:903.60px;">2</span>
<span class="t" style="top:555px;font-size:9px;line-height:10px;color:#555;letter-spacing:-0.12px;left:916.20px;-webkit-text-stroke:0.18px #555;">Lois Griffin</span>
<span class="t" style="top:555px;font-size:9px;line-height:10px;color:#8b8b8b;letter-spacing:-0.2px;left:1071.00px;">9938</span>
<span class="t" style="top:578px;font-size:7.8px;line-height:9px;color:#666;letter-spacing:-0.2px;left:903.60px;">3</span>
<span class="t" style="top:577px;font-size:9px;line-height:10px;color:#555;letter-spacing:-0.12px;left:916.20px;-webkit-text-stroke:0.18px #555;">Lowell Goodwin</span>
<span class="t" style="top:577px;font-size:9px;line-height:10px;color:#8b8b8b;letter-spacing:-0.2px;left:1071.00px;">9006</span>
<span class="t" style="top:600px;font-size:7.8px;line-height:9px;color:#666;letter-spacing:-0.2px;left:903.60px;">4</span>
<span class="t" style="top:600px;font-size:9px;line-height:10px;color:#555;letter-spacing:-0.12px;left:916.20px;-webkit-text-stroke:0.18px #555;">Rolando Poole</span>
<span class="t" style="top:600px;font-size:9px;line-height:10px;color:#8b8b8b;letter-spacing:-0.2px;left:1071.00px;">7486</span>
<span class="t" style="top:623px;font-size:7.8px;line-height:9px;color:#666;letter-spacing:-0.2px;left:903.60px;">5</span>
<span class="t" style="top:622px;font-size:9px;line-height:10px;color:#555;letter-spacing:-0.12px;left:916.20px;-webkit-text-stroke:0.18px #555;">Virginia Gonzalez</span>
<span class="t" style="top:622px;font-size:9px;line-height:10px;color:#8b8b8b;letter-spacing:-0.2px;left:1071.00px;">7242</span>
<span class="t" style="top:661px;font-size:6.7px;line-height:7px;color:#2b7fb7;letter-spacing:-0.1px;left:913.00px;-webkit-text-stroke:0.15px #2b7fb7;">MORE &gt;</span>
</div></body></html>
